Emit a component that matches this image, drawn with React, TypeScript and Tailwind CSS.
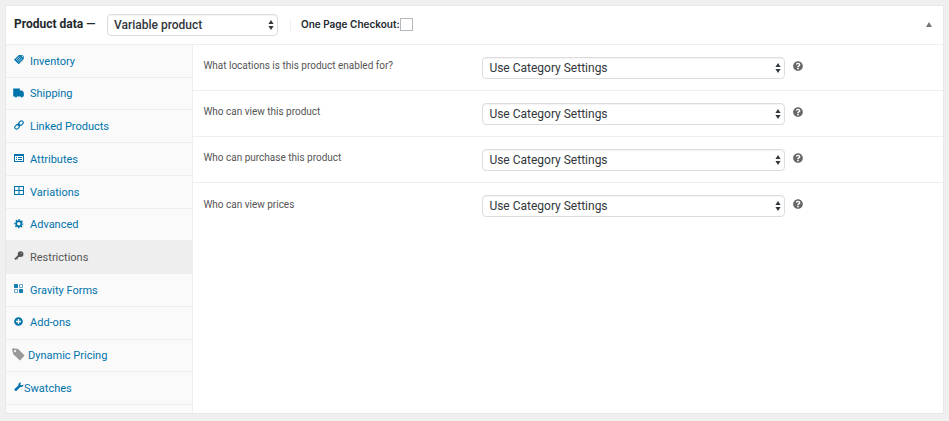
import { useState } from 'react'
import type { ReactNode } from 'react'
import { FaPlusCircle, FaQuestionCircle } from 'react-icons/fa'

const InventoryIcon = () => (
  <svg viewBox="0 0 10 10" className="size-[10px]">
    <path d="M0 4.7 4.9.1 8.6.2 9.8 1.4 9.7 4 4.7 9.2Z" fill="#0073aa" />
    <path d="M1.9 4.9 5.4 1.6M3.1 6 6.8 2.5M4.3 7.2 8 3.6" stroke="#b5d3e4" strokeWidth=".9" />
    <circle cx="8.3" cy="1.6" r=".6" fill="#fafafa" />
  </svg>
)

const ShippingIcon = () => (
  <svg viewBox="0 0 11 10" className="-ml-px h-[10px] w-[11px]" fill="#0073aa">
    <path d="M.4.6H6.9V2.4H9.3L10.8 4.4V8.4H.2V1Z" />
    <circle cx="2.9" cy="8.4" r="1" />
    <circle cx="8.7" cy="8.4" r="1" />
  </svg>
)

const LinkIcon = () => (
  <svg viewBox="0 0 10 10" className="size-[10px]" fill="none" stroke="#0073aa" strokeWidth="1.1">
    <rect x="4.4" y="1.4" width="5" height="3.6" rx="1.8" transform="rotate(-45 6.9 3.2)" />
    <rect x=".6" y="5" width="5" height="3.6" rx="1.8" transform="rotate(-45 3.1 6.8)" />
    <path d="M3.8 6.1 6.2 3.7" />
  </svg>
)

const AttributesIcon = () => (
  <svg viewBox="0 0 10 10" className="size-[10px]">
    <path d="M0 1h10v8H0z" fill="#0073aa" />
    <path d="M1 3h8v5H1z" fill="#fafafa" />
    <path d="M2 4h1v1H2zM2 6h1v1H2zM4 4h4v1H4zM4 6h4v1H4z" fill="#0073aa" />
  </svg>
)

const VariationsIcon = () => (
  <svg viewBox="0 0 10 10" className="size-[10px]" fill="none" stroke="#0073aa" strokeWidth="1.1">
    <path d="M.5.5h9v8h-9zM5 .5v8M.5 4.5h9" />
  </svg>
)

const GearIcon = () => (
  <svg viewBox="0 0 10 10" className="size-[10px]" fill="none" stroke="#0073aa">
    <circle cx="4.8" cy="4.8" r="2.6" strokeWidth="1.7" />
    <circle cx="4.8" cy="4.8" r="3.9" strokeWidth="1.3" strokeDasharray="1.6 1.463" strokeDashoffset=".8" />
  </svg>
)

const KeyIcon = () => (
  <svg viewBox="0 0 10 10" className="size-[10px]">
    <path d="M5.4 4.2 1 8.4" stroke="#555" strokeWidth="2" />
    <path d="M2.4 7.2 3.6 8.2" stroke="#555" strokeWidth="1" />
    <circle cx="6.6" cy="3.1" r="2.9" fill="#555" />
    <path d="M6.9 1.8 8 2.9" stroke="#bbb" strokeWidth=".8" />
  </svg>
)

const FormsIcon = () => (
  <svg viewBox="0 0 10 10" className="size-[10px]" fill="none" stroke="#0073aa" strokeWidth=".9">
    <path d="M.5.5h3v3h-3zM5.5 5.5h3v3h-3z" fill="#a9cde0" />
    <path d="M.7.7 3.3 3.3M3.3.7.7 3.3M5.7 5.7 8.3 8.3M8.3 5.7 5.7 8.3" />
    <path d="M5.5.5h3v3h-3zM.5 5.5h3v3h-3z" stroke="#5c9fc4" />
  </svg>
)

const TagIcon = () => (
  <svg viewBox="0 0 13 13" className="size-[13px]">
    <path d="M0 1.2 1 .2 6.2.9 12.6 7.6 8 12.6 1.3 6.2Z" fill="#999" />
    <circle cx="3.1" cy="3.1" r="1.1" fill="#fafafa" />
  </svg>
)

const WrenchIcon = () => (
  <svg viewBox="0 0 10 10" className="size-[10px]">
    <path d="M9.3 2.4 7.4 3.6 6.1 2.3 7.2.5C5.6.1 4.1 1.4 4.5 3.2L.6 6.9C-.2 8 1.4 9.5 2.6 8.7L6.3 5C8.1 5.5 9.7 4.2 9.3 2.4Z" fill="#0073aa" />
  </svg>
)

const tabs = [
  { id: 'inventory', label: 'Inventory', icon: <InventoryIcon /> },
  { id: 'shipping', label: 'Shipping', icon: <ShippingIcon /> },
  { id: 'linked', label: 'Linked Products', icon: <LinkIcon /> },
  { id: 'attributes', label: 'Attributes', icon: <AttributesIcon /> },
  { id: 'variations', label: 'Variations', icon: <VariationsIcon /> },
  { id: 'advanced', label: 'Advanced', icon: <GearIcon /> },
  { id: 'restrictions', label: 'Restrictions', icon: <KeyIcon /> },
  { id: 'gravity', label: 'Gravity Forms', icon: <FormsIcon /> },
  { id: 'addons', label: 'Add-ons', icon: <FaPlusCircle className="size-[9px]" /> },
  { id: 'pricing', label: 'Dynamic Pricing', icon: <TagIcon />, wrap: 'w-4 -ml-0.5' },
  { id: 'swatches', label: 'Swatches', icon: <WrenchIcon />, wrap: 'w-[10px]' }
]

const fields = [
  { id: 'locations', label: 'What locations is this product enabled for?' },
  { id: 'view', label: 'Who can view this product' },
  { id: 'purchase', label: 'Who can purchase this product' },
  { id: 'prices', label: 'Who can view prices' }
]

function SelectBox({ id, className, children }: { id: string; className: string; children: ReactNode }) {
  return (
    <div className={`relative text-[12px] ${className}`}>
      <select
        id={id}
        className="block h-[22px] w-full appearance-none rounded-[4px] border border-[#ddd] bg-white pl-1.5 pr-4 text-[#32373c] shadow-[inset_0_1px_1px_rgba(0,0,0,0.05)]"
      >
        {children}
      </select>
      <svg viewBox="0 0 6 10" className="pointer-events-none absolute right-1 top-1.5 h-[10px] w-[6px]" fill="#32373c">
        <path d="M3 0 5.6 4H.4ZM3 10 .4 6h5.2Z" />
      </svg>
    </div>
  )
}

export default function App() {
  const [active, setActive] = useState('restrictions')

  return (
    <div className="flex min-h-screen bg-[#f0f0f0] px-[5px] pt-[5px] pb-[7px] font-['Roboto',sans-serif] text-[#555]">
      <div className="flex flex-1 flex-col border border-[#e8e8e8] bg-white">
        {/* Header */}
        <div className="flex h-[39px] shrink-0 items-center border-b border-[#eee] pl-2 pr-[11px] text-[#23282d]">
          <label htmlFor="product-type" className="w-[93px] pb-0.5 text-[12px] font-bold">Product data —</label>
          <SelectBox id="product-type" className="w-[171px] font-medium">
            <option>Variable product</option>
          </SelectBox>
          <div className="ml-3 h-3 w-px bg-[#eee]" />
          <label htmlFor="checkout" className="ml-[10px] pb-0.5 font-['Inter',sans-serif] text-[10px] font-semibold">One Page Checkout:</label>
          <input
            id="checkout"
            type="checkbox"
            className="mb-0.5 size-[13px] appearance-none border border-[#b4b9be] bg-white checked:bg-[#0073aa]"
          />
          <button type="button" aria-label="Toggle panel" className="ml-auto pb-0.5">
            <svg viewBox="0 0 6 5" className="h-[5px] w-[6px]" fill="#72777c">
              <path d="M3 0 6 5H0Z" />
            </svg>
          </button>
        </div>

        <div className="flex flex-1">
          {/* Tabs */}
          <nav className="flex w-1/5 flex-col border-r border-[#eee] bg-[#fafafa] pb-2 text-[11px]">
            {tabs.map((tab) => (
              <a
                key={tab.id}
                href={`#${tab.id}`}
                onClick={() => setActive(tab.id)}
                className={`flex min-h-8 flex-1 items-center border-b border-[#eee] pt-0.5 pl-2 ${
                  active === tab.id ? 'bg-[#eee] text-[#555]' : 'text-[#0073aa]'
                }`}
              >
                <span className={`pb-1 ${tab.wrap ?? 'w-4'}`}>{tab.icon}</span>
                {tab.label}
              </a>
            ))}
          </nav>

          {/* Fields */}
          <div className="flex-1">
            {fields.map((field) => (
              <div key={field.id} className="flex h-[46px] items-center border-b border-[#eee] pl-[10px] last:border-b-0">
                <label htmlFor={field.id} className="w-[279px] pb-1 text-[10px]">{field.label}</label>
                <SelectBox id={field.id} className="w-[303px]">
                  <option>Use Category Settings</option>
                </SelectBox>
                <button type="button" aria-label="Help" className="ml-2 pb-1">
                  <FaQuestionCircle className="size-[10px] text-[#666]" />
                </button>
              </div>
            ))}
          </div>
        </div>
      </div>
    </div>
  )
}
